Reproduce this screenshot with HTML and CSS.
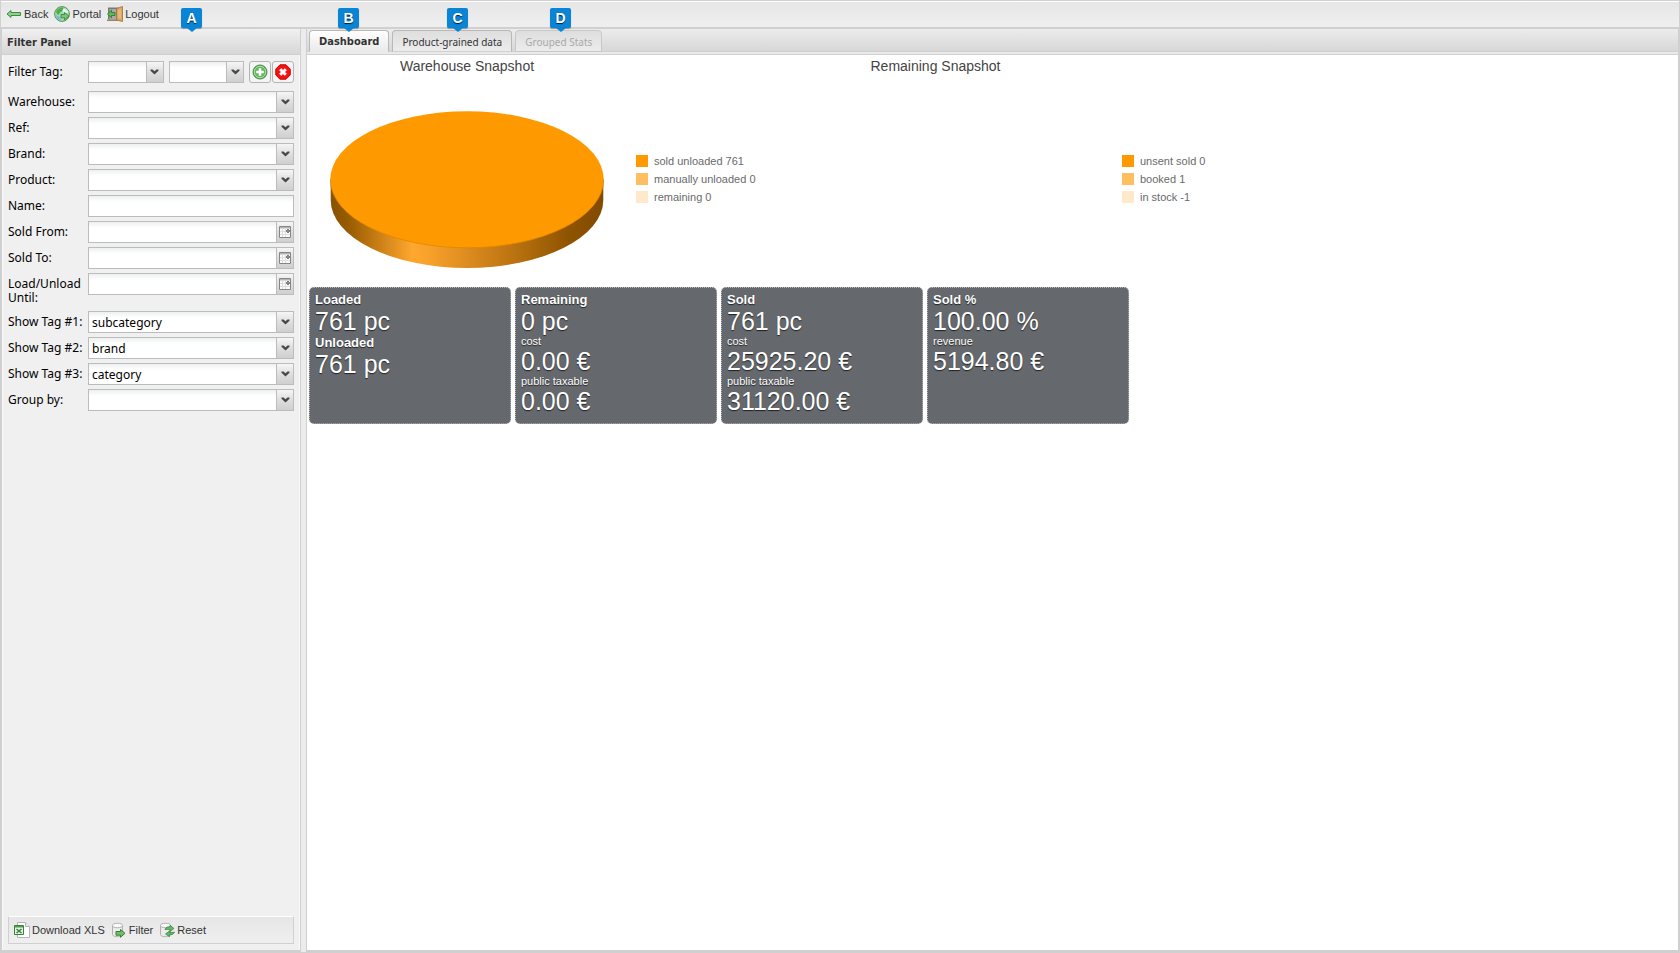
FILE: index.html
```html
<!DOCTYPE html>
<html lang="en">
<head>
<meta charset="utf-8">
<title>Warehouse Statistics</title>
<link rel="stylesheet" href="styles.css">
</head>
<body>
<svg class="defs" aria-hidden="true">
  <symbol id="chevron" viewBox="0 0 9 6"><path d="M.5.500h2L4.500 2.200 6.500.5h2v1.300L4.500 5.500.5 1.800z" fill="#484848"/></symbol>
  <symbol id="calendar" viewBox="0 0 12 12"><path d="M.5.5h11v11H.5z" fill="#fafafa" stroke="#858585"/><path d="M1 1h10v1.500H1z" fill="#b4b4b4"/><path d="M1 5.500h10M1 8.500h10M3.500 3v8M6.500 3v8" stroke="#dedede"/><path d="M7 3h4v4H7z" fill="#fff"/><circle cx="9" cy="5" r="1.300" fill="#fff" stroke="#333"/></symbol>
  <symbol id="db" viewBox="0 0 16 16"><path d="M1.500 3.500v9c0 1.200 2 2.200 5 2.200s5-1 5-2.200v-9z" fill="#ececec" stroke="#b0b0b0"/><ellipse cx="6.500" cy="3.500" rx="5" ry="2.200" fill="#fafafa" stroke="#b0b0b0"/></symbol>
</svg>
<div class="app">
  <nav class="toolbar">
    <button class="tool" type="button">
      <svg class="icon" viewBox="0 0 16 16"><path d="M1 8l4-3.500v2h9.500v3H5v2z" fill="#8fd08b" stroke="#3f8a45"/></svg>Back</button>
    <button class="tool" type="button">
      <svg class="icon" viewBox="0 0 16 16"><circle cx="8" cy="8" r="7.400" fill="#a9d8b4" stroke="#4a9a50"/><path d="M2 5.500C4 1.500 8 1 10 2L8.500 5 6 6.500 4.500 9 3 8z" fill="#4fae4a"/><path d="M9 2.500c3 0 5 2 5.500 4L11 7 8.500 5.500z" fill="#e2f3f2"/><path d="M2 9l4 2 1 3.500C4 14 2 12 2 9z" fill="#7db7d8"/><path d="M7 8.500h3.500V6.500L15 10.200l-4.500 3.600v-2H7z" fill="#7bc96f" stroke="#2f7d36" stroke-width=".8"/></svg>Portal</button>
    <button class="tool" type="button">
      <svg class="icon" viewBox="0 0 16 16"><path d="M1 1.500h10v12H1z" fill="#777b75"/><path d="M2.500 3h7v10h-7z" fill="#a9aaa5"/><path d="M0 13.500h11V15H0z" fill="#9a8567"/><path d="M9.500 2.500L15.500.5v15l-6-1.500z" fill="#d9a562" stroke="#a36e32" stroke-width=".8"/><path d="M11 4l3-.8v9.600l-3-.8z" fill="#e6b980"/><path d="M.5 8l4-3.800v2.300H8v3H4.500v2.300z" fill="#5fb85a" stroke="#2a7431" stroke-width=".8"/></svg>Logout</button>
  </nav>

  <div class="workspace">
    <aside class="sidebar">
      <h2 class="panel-title">Filter Panel</h2>
      <form class="filter">
        <div class="fields">
          <div class="row row-tag">
            <label for="tag-key">Filter Tag:</label>
            <div class="tag-controls">
              <span class="combo"><select id="tag-key"><option></option></select><span class="trigger"><svg class="chevron"><use href="#chevron"/></svg></span></span>
              <span class="combo"><select aria-label="Tag value"><option></option></select><span class="trigger"><svg class="chevron"><use href="#chevron"/></svg></span></span>
              <span class="tag-buttons">
                <button class="square" type="button" aria-label="Add tag"><svg class="icon" viewBox="0 0 16 16"><circle cx="8" cy="8" r="7" fill="#64b35f" stroke="#3f8d42"/><circle cx="8" cy="8" r="5.700" fill="none" stroke="#b5deb0"/><path d="M6.700 4.200h2.600v2.500h2.500v2.600H9.300v2.500H6.700V9.300H4.200V6.700h2.500z" fill="#fff"/></svg></button>
                <button class="square" type="button" aria-label="Remove tag"><svg class="icon" viewBox="0 0 16 16"><path d="M5 .8h6L15.200 5v6L11 15.200H5L.8 11V5z" fill="#f31313" stroke="#c80000"/><path d="M5.200 5.200l5.600 5.600M10.800 5.200l-5.600 5.600" stroke="#fff" stroke-width="3"/></svg></button>
              </span>
            </div>
          </div>
          <div class="row"><label for="warehouse">Warehouse:</label><span class="combo"><select id="warehouse"><option></option></select><span class="trigger"><svg class="chevron"><use href="#chevron"/></svg></span></span></div>
          <div class="row"><label for="ref">Ref:</label><span class="combo"><select id="ref"><option></option></select><span class="trigger"><svg class="chevron"><use href="#chevron"/></svg></span></span></div>
          <div class="row"><label for="brand">Brand:</label><span class="combo"><select id="brand"><option></option></select><span class="trigger"><svg class="chevron"><use href="#chevron"/></svg></span></span></div>
          <div class="row"><label for="product">Product:</label><span class="combo"><select id="product"><option></option></select><span class="trigger"><svg class="chevron"><use href="#chevron"/></svg></span></span></div>
          <div class="row"><label for="name">Name:</label><input id="name" type="text"></div>
          <div class="row"><label for="sold-from">Sold From:</label><span class="combo"><input id="sold-from" type="text"><button class="trigger" type="button" aria-label="Pick sold from date"><svg class="calendar"><use href="#calendar"/></svg></button></span></div>
          <div class="row"><label for="sold-to">Sold To:</label><span class="combo"><input id="sold-to" type="text"><button class="trigger" type="button" aria-label="Pick sold to date"><svg class="calendar"><use href="#calendar"/></svg></button></span></div>
          <div class="row row-tall"><label for="until">Load/Unload Until:</label><span class="combo"><input id="until" type="text"><button class="trigger" type="button" aria-label="Pick load or unload date"><svg class="calendar"><use href="#calendar"/></svg></button></span></div>
          <div class="row"><label for="tag1">Show Tag #1:</label><span class="combo"><select id="tag1"><option>subcategory</option></select><span class="trigger"><svg class="chevron"><use href="#chevron"/></svg></span></span></div>
          <div class="row"><label for="tag2">Show Tag #2:</label><span class="combo"><select id="tag2"><option>brand</option></select><span class="trigger"><svg class="chevron"><use href="#chevron"/></svg></span></span></div>
          <div class="row"><label for="tag3">Show Tag #3:</label><span class="combo"><select id="tag3"><option>category</option></select><span class="trigger"><svg class="chevron"><use href="#chevron"/></svg></span></span></div>
          <div class="row"><label for="group">Group by:</label><span class="combo"><select id="group"><option></option></select><span class="trigger"><svg class="chevron"><use href="#chevron"/></svg></span></span></div>
        </div>
        <div class="actions">
          <button class="tool" type="button"><svg class="icon" viewBox="0 0 16 16"><path d="M3.500.5h8l4 4v11h-12z" fill="#fff" stroke="#b5b5b5"/><path d="M11.500.5v4h4" fill="#eee" stroke="#b5b5b5"/><path d="M.5 3.500h9v9h-9z" fill="#e4f1e2" stroke="#37823a"/><path d="M1 4h8v1.500H1z" fill="#4f9a50"/><path d="M2.500 7l5 4M7.500 7l-5 4" stroke="#37823a" stroke-width="1.500"/></svg>Download XLS</button>
          <button class="tool" type="button"><svg class="icon" viewBox="0 0 16 16"><use href="#db"/><path d="M5 9.500h4.500v-2L14 11.300l-4.500 4v-2.100H5z" fill="#73bf65" stroke="#34803a"/></svg>Filter</button>
          <button class="tool" type="button"><svg class="icon" viewBox="0 0 16 16"><use href="#db"/><path d="M6 7.500c1-2.500 3-3 5-2.500V3.300L15 6.500l-4 3V7.800c-2-.5-3-.3-5-.3zM15.500 10c-1 2.500-3 3-5 2.700v2L6.500 12l4-3v1.500c2 .3 3 0 5-.5z" fill="#63b766" stroke="#34803a" stroke-width=".7"/></svg>Reset</button>
        </div>
      </form>
    </aside>

    <main class="main">
      <div class="tabs" role="tablist">
        <button class="tab tab-active" role="tab" aria-selected="true" type="button">Dashboard</button>
        <button class="tab" role="tab" aria-selected="false" type="button">Product-grained data</button>
        <button class="tab tab-disabled" role="tab" aria-selected="false" type="button" disabled>Grouped Stats</button>
      </div>
      <div class="content">
        <div class="charts">
          <figure class="chart chart-sold">
            <figcaption>Warehouse Snapshot</figcaption>
            <svg class="pie" viewBox="0 0 274 158" role="img" aria-label="Pie chart: sold unloaded 761">
              <defs><linearGradient id="rim"><stop offset="0" stop-color="#8a5200"/><stop offset=".06" stop-color="#965a00"/><stop offset=".3" stop-color="#ffa72e"/><stop offset=".36" stop-color="#f8a12b"/><stop offset=".65" stop-color="#bf7612"/><stop offset=".87" stop-color="#8f5400"/><stop offset="1" stop-color="#824a00"/></linearGradient></defs>
              <path d="M.7 68v21a136.300 68 0 0 0 272.600 0V68z" fill="url(#rim)"/>
              <ellipse cx="137" cy="68.500" rx="136.700" ry="68.300" fill="#ff9900"/>
              <path d="M.3 68.500a136.700 68.300 0 0 0 273.400 0" fill="none" stroke="#e08600" stroke-width=".8"/>
            </svg>
            <ul class="legend"><li>sold unloaded 761</li><li>manually unloaded 0</li><li>remaining 0</li></ul>
          </figure>
          <figure class="chart chart-remaining">
            <figcaption>Remaining Snapshot</figcaption>
            <ul class="legend"><li>unsent sold 0</li><li>booked 1</li><li>in stock -1</li></ul>
          </figure>
        </div>
        <div class="cards">
          <section class="card"><h3>Loaded</h3><p>761 pc</p><h3>Unloaded</h3><p>761 pc</p></section>
          <section class="card"><h3>Remaining</h3><p>0 pc</p><h4>cost</h4><p>0.00 €</p><h4>public taxable</h4><p>0.00 €</p></section>
          <section class="card"><h3>Sold</h3><p>761 pc</p><h4>cost</h4><p>25925.20 €</p><h4>public taxable</h4><p>31120.00 €</p></section>
          <section class="card"><h3>Sold %</h3><p>100.00 %</p><h4>revenue</h4><p>5194.80 €</p></section>
        </div>
      </div>
    </main>
  </div>
  <span class="marker marker-a">A</span>
  <span class="marker marker-b">B</span>
  <span class="marker marker-c">C</span>
  <span class="marker marker-d">D</span>
</div>
</body>
</html>
```
FILE: styles.css
```css
* { box-sizing: border-box; }
html, body { height: 100%; }
body { margin: 0; font-family: "Liberation Sans", Arial, sans-serif; font-size: 11px; color: #333; background: #f0f0f0; }
h2, h3, h4, p, ul, figure { margin: 0; padding: 0; }
button, input, select { font: inherit; color: inherit; margin: 0; }
.defs { position: absolute; width: 0; height: 0; }

.app { position: relative; display: flex; flex-direction: column; min-height: 100vh; border: 1px solid #d0d0d0; }
.toolbar { display: flex; align-items: center; gap: 6px; height: 28px; padding: 0 5px 1px; border-top: 1px solid #fff; border-bottom: 2px solid #d0d0d0; background: linear-gradient(#e6e6e6, #efefef); }
.tool { display: inline-flex; align-items: center; gap: 2px; padding: 0; border: 0; background: none; white-space: nowrap; }
.icon { width: 16px; height: 16px; flex: none; display: block; }

.workspace { flex: 1; display: flex; gap: 5px; background: #ececec; }
.sidebar { flex: none; width: 300px; display: flex; flex-direction: column; border: 1px solid #d0d0d0; border-top: 0; border-bottom-width: 2px; background: #f0f0f0; }
.panel-title { height: 26px; padding: 1px 5px 0; border-bottom: 1px solid #d0d0d0; background: linear-gradient(#f0f0f0, #d7d7d7); font: bold 11px/25px "DejaVu Sans Condensed", "Noto Sans", sans-serif; color: #333; }
.filter { flex: 1; display: flex; flex-direction: column; justify-content: space-between; padding: 6px 5px; border-left: 1px solid #fafafa; border-right: 1px solid #fafafa; font: 12px/14px "Noto Sans", sans-serif; color: #000; }
.fields { display: flex; flex-direction: column; gap: 4px; }
.row { display: grid; grid-template-columns: 80px 1fr; align-items: start; min-height: 22px; }
.row label { padding-top: 4px; }
.row-tag { margin-bottom: 4px; }
.row-tall { min-height: 34px; }
.tag-controls { display: flex; gap: 5px; }
.tag-controls .combo { flex: 1; }
.tag-buttons { display: flex; gap: 1px; }
.combo { display: grid; grid-template-columns: minmax(0, 1fr) 17px; height: 22px; border: 1px solid #bcbcbe; background: linear-gradient(#eef0f0, #fff 6px); }
.combo input, .combo select { grid-row: 1; grid-column: 1 / 3; width: 100%; height: 20px; padding: 1px 20px 0 3px; border: 0; border-radius: 0; background: none; appearance: none; }
.combo .trigger { grid-row: 1; grid-column: 2; display: grid; place-items: center; height: 20px; padding: 0; border: 0; border-left: 1px solid #bcbcbe; background: linear-gradient(#f6f6f6, #dedede 50%, #cfcfcf); pointer-events: none; }
.combo button.trigger { pointer-events: auto; }
.chevron { width: 9px; height: 6px; }
.calendar { width: 12px; height: 12px; }
.row > input { width: 100%; height: 22px; padding: 0 3px; border: 1px solid #bcbcbe; background: linear-gradient(#eef0f0, #fff 6px); }
.square { display: grid; place-items: center; width: 22px; height: 22px; padding: 0; border: 1px solid #b4b4b4; border-radius: 3px; background: #f4f4f4; }
.actions { display: flex; align-items: center; gap: 6px; height: 28px; padding: 0 5px; border: 1px solid #d0d0d0; border-top-color: #fff; background: linear-gradient(#e6e6e6, #efefef); font: 11px/14px "Liberation Sans", Arial, sans-serif; color: #333; }

.main { flex: 1; min-width: 0; display: flex; flex-direction: column; border: 1px solid #d0d0d0; border-top: 0; border-bottom-width: 2px; background: #fff; }
.tabs { display: flex; align-items: flex-end; gap: 3px; height: 26px; padding: 1px 2px 2px; border-bottom: 1px solid #d0d0d0; background: linear-gradient(#d0d0d0, #d0d0d0) 0 22px / 100% 1px no-repeat, linear-gradient(#ececec, #d7d7d7 22px, #eaeaea 22px); }
.tab { height: 22px; padding: 1px 9px 0; border: 1px solid #b8b8b8; border-bottom-color: #d0d0d0; border-radius: 4px 4px 0 0; background: linear-gradient(#dedede, #ececec); font: 10px/20px "Noto Sans", sans-serif; color: #333; white-space: nowrap; }
.tab-active { border-bottom-color: #eaeaea; background: linear-gradient(#fff, #eaeaea); font: bold 11px/20px "DejaVu Sans Condensed", "Noto Sans", sans-serif; }
.tab-disabled { border-color: #c8c8c8; color: #aaa; }

.content { flex: 1; padding: 0 2px; }
.charts { display: flex; height: 232px; }
.chart { display: grid; grid-template-rows: 22px 1fr; }
.chart-sold { grid-template-columns: 316px 124px; column-gap: 11px; width: 440px; flex: none; }
.chart-remaining { grid-template-columns: 373px 1fr; flex: 1; }
.chart figcaption { font-size: 14px; line-height: 22px; text-align: center; color: #444; }
.pie { grid-area: 2 / 1; width: 274px; height: 158px; margin: 34px auto 0; }
.legend { grid-area: 2 / 2; display: flex; flex-direction: column; gap: 6px; margin-top: 78px; list-style: none; color: #6a6a6a; line-height: 12px; white-space: nowrap; }
.legend li { display: flex; gap: 6px; }
.legend li::before { content: ""; width: 12px; height: 12px; background: #ff9900; }
.legend li:nth-child(2)::before { background: #ffbf60; }
.legend li:nth-child(3)::before { background: #ffe9cb; }

.cards { display: flex; flex-wrap: wrap; gap: 4px; }
.card { width: 202px; min-height: 137px; padding: 4px 5px; border: 1px dotted #b4b5b7; border-radius: 5px; background: #65686d; color: #fff; text-shadow: 0 1px 1px #222; }
.card h3 { font-size: 13px; line-height: 16px; }
.card h4 { font-size: 11px; line-height: 13px; font-weight: normal; }
.card p { font-size: 25px; line-height: 27px; }

.marker { position: absolute; top: 7px; width: 21px; height: 20px; margin-left: -10px; border-radius: 2px; background: #0a84d4; color: #fff; font: bold 14px/20px "Liberation Sans", Arial, sans-serif; text-align: center; text-shadow: 0 1px 1px #024; box-shadow: 0 1px 1px rgba(0, 0, 0, .3); }
.marker::after { content: ""; position: absolute; top: 20px; left: 6px; border: 5px solid transparent; border-top: 4px solid #0a84d4; border-bottom: 0; }
.marker-a { left: 190px; }
.marker-b { left: 347px; }
.marker-c { left: 456px; }
.marker-d { left: 559px; }
```
